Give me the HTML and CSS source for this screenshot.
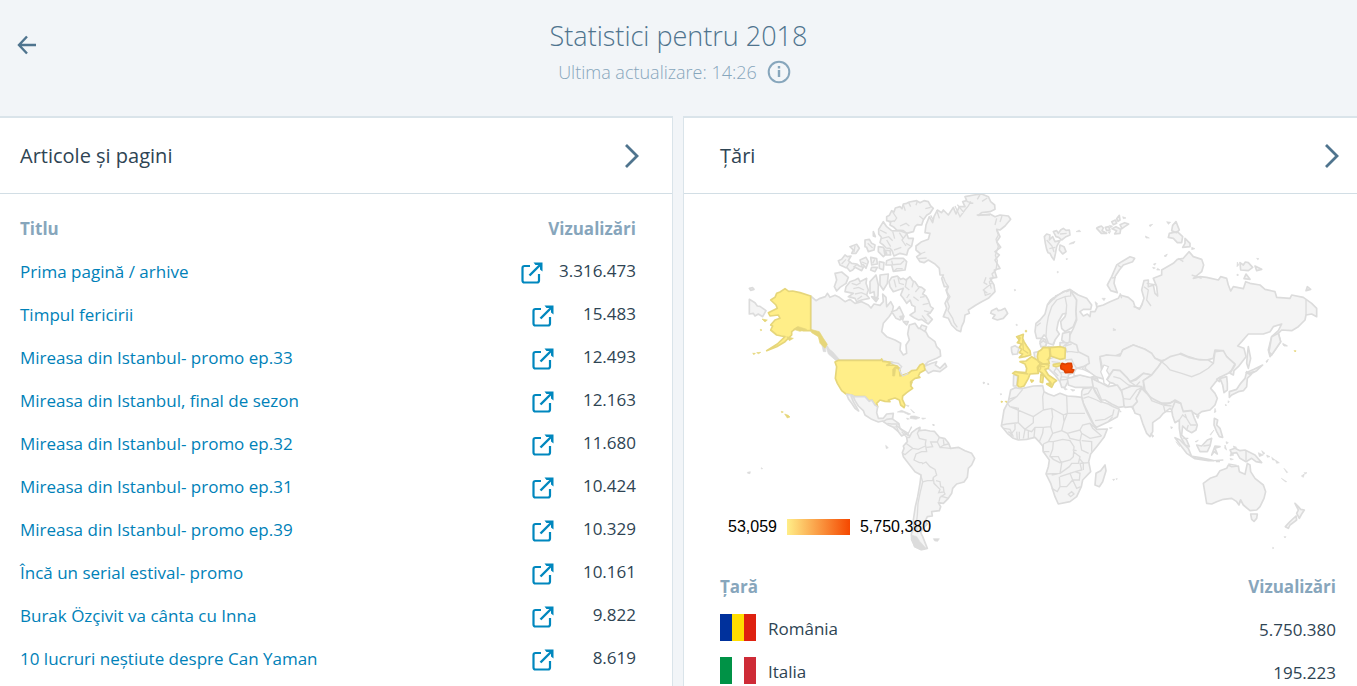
FILE: index.html
```html
<!doctype html>
<html lang="ro">
<head>
    <meta charset="utf-8">
    <title>Statistici pentru 2018</title>
    <link rel="stylesheet" href="styles.css">
</head>

<body>
<svg class="sprite" aria-hidden="true">
    <symbol id="external" viewBox="0 0 22 22">
        <path d="M9 4H3.500Q1.500 4 1.500 6V18.500Q1.500 20.500 3.500 20.500H16Q18 20.500 18 18.500V12" fill="none" stroke="currentColor" stroke-width="2.200"/>
        <path d="M8.500 13.500L20 2" fill="none" stroke="currentColor" stroke-width="2.400"/>
        <path d="M12.500 .500H21.500V9.500L19 7.500V3H14.500z" fill="currentColor"/>
    </symbol>
    <symbol id="chevron" viewBox="0 0 16 26">
        <path d="M2 2L13 13L2 24" fill="none" stroke="currentColor" stroke-width="2.800"/>
    </symbol>
</svg>

<header class="top">
    <a class="back" href="#" aria-label="Înapoi">
        <svg viewBox="0 0 20 20"><path d="M10 1.500L2 10L10 18.500M2 10H19" fill="none" stroke="currentColor" stroke-width="2.400"/></svg>
    </a>
    <div class="heading">
        <h1>Statistici pentru 2018</h1>
        <p>Ultima actualizare: 14:26
            <svg class="info" viewBox="0 0 24 24"><circle cx="12" cy="12" r="10.300" fill="none" stroke="currentColor" stroke-width="2"/><path d="M10.800 6h2.400v2.500h-2.400zM10.800 10h2.400v7h-2.400z" fill="currentColor"/></svg>
        </p>
    </div>
</header>

<main class="columns">
    <section class="card posts">
        <a class="card_head" href="#">
            <h2>Articole și pagini</h2>
            <svg class="chevron"><use href="#chevron"/></svg>
        </a>
        <table>
            <thead>
            <tr><th>Titlu</th><th class="num">Vizualizări</th></tr>
            </thead>
            <tbody>
            <tr><td><a href="#">Prima pagină / arhive</a></td><td class="num"><a href="#" aria-label="Deschide"><svg class="ext"><use href="#external"/></svg></a><span>3.316.473</span></td></tr>
            <tr><td><a href="#">Timpul fericirii</a></td><td class="num"><a href="#" aria-label="Deschide"><svg class="ext"><use href="#external"/></svg></a><span>15.483</span></td></tr>
            <tr><td><a href="#">Mireasa din Istanbul- promo ep.33</a></td><td class="num"><a href="#" aria-label="Deschide"><svg class="ext"><use href="#external"/></svg></a><span>12.493</span></td></tr>
            <tr><td><a href="#">Mireasa din Istanbul, final de sezon</a></td><td class="num"><a href="#" aria-label="Deschide"><svg class="ext"><use href="#external"/></svg></a><span>12.163</span></td></tr>
            <tr><td><a href="#">Mireasa din Istanbul- promo ep.32</a></td><td class="num"><a href="#" aria-label="Deschide"><svg class="ext"><use href="#external"/></svg></a><span>11.680</span></td></tr>
            <tr><td><a href="#">Mireasa din Istanbul- promo ep.31</a></td><td class="num"><a href="#" aria-label="Deschide"><svg class="ext"><use href="#external"/></svg></a><span>10.424</span></td></tr>
            <tr><td><a href="#">Mireasa din Istanbul- promo ep.39</a></td><td class="num"><a href="#" aria-label="Deschide"><svg class="ext"><use href="#external"/></svg></a><span>10.329</span></td></tr>
            <tr><td><a href="#">Încă un serial estival- promo</a></td><td class="num"><a href="#" aria-label="Deschide"><svg class="ext"><use href="#external"/></svg></a><span>10.161</span></td></tr>
            <tr><td><a href="#">Burak Özçivit va cânta cu Inna</a></td><td class="num"><a href="#" aria-label="Deschide"><svg class="ext"><use href="#external"/></svg></a><span>9.822</span></td></tr>
            <tr><td><a href="#">10 lucruri neștiute despre Can Yaman</a></td><td class="num"><a href="#" aria-label="Deschide"><svg class="ext"><use href="#external"/></svg></a><span>8.619</span></td></tr>
            </tbody>
        </table>
    </section>

    <section class="card countries">
        <a class="card_head" href="#">
            <h2>Țări</h2>
            <svg class="chevron"><use href="#chevron"/></svg>
        </a>
        <div class="map">
            <svg class="world" viewBox="0 0 1848 1113" aria-label="Hartă">
                <!-- Canada, Arctic, Alaska -->
                <g transform="translate(60 -12)">
                    <path class="land" d="M212 318L228 332L240 325L256 320L262 310L270 322L285 316L298 322L315 335L330 328L345 340L365 335L385 345L393 354L402 342L420 346L430 335L428 312L438 322L440 350L452 335L460 350L457 365L447 380L430 400L425 425L440 440L465 450L482 460L480 480L490 495L500 490L498 465L508 450L503 432L508 405L525 400L535 415L550 415L560 430L565 440L585 455L590 470L600 480L602 498L590 505L565 515L550 530L575 520L590 515L586 525L600 535L615 520L620 530L600 545L580 542L565 550L553 535L545 525L530 540L510 547L485 560L478 540L455 520L425 510L295 510L285 500L270 485L262 470L245 450L235 430L212 422Z"/>
                    <path class="land" d="M440 80L448 76L455 62L462 66L466 54L480 50L486 56L490 42L500 40L508 36L530 32L540 38L552 32L565 35L572 48L580 55L570 70L560 76L550 90L545 105L532 104L525 110L520 125L500 130L490 122L470 120L462 112L450 105L452 95L440 92Z"/>
                    <path class="land" d="M430 95L440 110L455 122L482 123L500 130L505 145L520 145L515 168L505 178L500 195L480 190L462 198L456 182L450 175L438 174L430 165L420 158L424 142L416 132L416 118Z"/>
                    <path class="line" d="M458 66L470 84L462 96M490 44L496 62M506 38L512 50M532 34L528 46M572 52L556 56M550 88L538 78M480 108L498 100L508 108M446 96L466 92M420 120L440 130M424 146L446 140L458 152M458 124L464 146M500 132L486 150L498 168M462 180L484 172M478 128L490 146M512 168L498 160M440 150L452 170"/>
                    <path class="land" d="M440 212L460 205L490 205L500 215L495 240L460 244L455 225L438 225ZM432 180L450 182L452 195L435 195ZM415 170L430 172L440 190L430 200L415 185ZM392 202L410 206L412 222L395 225ZM375 150L388 148L395 160L405 165L402 180L385 185L380 172L375 170ZM330 170L350 163L358 175L348 190L335 190L340 180ZM295 212L305 208L315 195L322 200L333 198L325 212L335 220L350 222L358 228L370 232L365 242L345 232L338 240L330 244L322 234L315 232L300 225ZM360 210L378 202L385 215L378 235L370 224L365 225ZM400 125L406 140L400 138ZM395 232L412 232L405 245L392 240ZM418 215L432 218L430 240L418 235Z"/>
                    <path class="line" d="M305 222L318 208M320 232L330 214M340 232L350 224M383 160L398 174M345 168L342 186M366 216L380 222M455 212L458 224L482 222L492 212M404 208L398 220M462 244L470 236L488 236"/>
                    <path class="land" d="M285 250L305 246L325 262L318 280L300 292L290 303L283 290L290 270Z"/>
                    <path class="land" d="M318 290L330 275L345 270L355 265L360 275L380 265L378 280L385 300L380 315L388 325L365 330L350 335L345 325L325 320L340 310L315 305Z"/>
                    <path class="line" d="M335 280L350 285L362 278M340 296L356 292L372 300M345 312L364 308L378 314M352 328L366 318"/>
                    <path class="land" d="M420 255L445 252L442 280L430 300L420 285ZM390 275L408 255L415 285L414 318L405 330L402 305L390 310ZM395 320L415 325L408 335Z"/>
                    <path class="land" d="M447 275L455 262L472 258L482 268L490 265L498 270L510 260L518 272L525 275L535 290L545 292L555 300L548 312L558 318L565 330L572 350L580 355L570 370L562 373L577 388L565 402L556 396L545 388L536 390L525 385L510 375L525 365L525 350L516 346L510 330L500 340L490 325L482 315L490 295L475 300L460 305L450 290Z"/>
                    <path class="line" d="M474 262L478 280L492 284M500 270L496 290L508 300M520 276L516 292M538 292L526 306M554 320L540 322M566 340L548 344M572 368L552 362M560 394L546 376M462 268L468 292M520 320L536 332M508 312L500 324"/>
                    <path class="land" d="M455 365L470 360L478 350L490 375L480 390L468 385ZM545 405L560 410L555 425L540 415ZM490 395L505 395L500 405ZM480 380L492 378L488 390Z"/>
                    <path class="land" d="M28 328L45 338L52 348L60 349L78 362L68 380L55 372L45 378L40 370L28 372ZM28 295L38 293L42 298L32 301Z"/>
                    <path class="land dark" d="M245 462L255 470L258 485L250 485ZM258 470L278 485L298 508L288 512L265 492Z"/>
                    <path class="usa" d="M92 330L105 322L110 310L120 306L135 296L146 304L158 303L180 308L212 318L212 422L190 422L172 412L155 425L155 435L135 455L110 470L80 482L112 462L135 440L124 438L110 435L92 420L98 408L92 405L105 390L120 385L115 375L90 378L85 368L112 355L108 345Z"/>
                    <path class="usa deep" d="M212 418L238 425L250 445L262 463L255 475L240 460L235 440L215 428ZM140 440L160 445L148 452ZM66 387L82 390L75 396ZM61 418L66 420L62 422ZM38 490L46 490L42 494ZM50 488L62 487L56 491ZM160 418L175 410L200 418L180 424Z"/>
                </g>
                <!-- USA, Mexico, Caribbean -->
                <g transform="translate(60 438)">
                    <path class="usa" d="M295 61L422 61L425 57L428 64L456 67L440 76L458 75L472 78L478 88L480 108L505 100L515 92L530 90L540 75L548 71L552 75L555 90L540 98L535 108L540 112L525 115L513 125L512 138L518 145L500 158L488 168L487 178L495 195L492 203L482 195L478 180L465 174L445 180L450 185L435 184L420 180L410 190L413 200L405 195L395 180L388 184L375 170L345 170L335 165L318 162L305 152L292 130L286 115L290 80L285 66Z"/>
                    <path class="usa deep" d="M465 80L458 88L458 108L464 108L467 85L476 88L482 95L478 82ZM124 214L130 216L125 218ZM134 222L145 226L150 231L142 234ZM510 125L518 125L512 140Z"/>
                    <path class="line" d="M452 66L475 70L485 80L478 90L488 108L505 100"/>
                    <path class="land" d="M320 163L335 165L345 170L375 170L388 184L395 180L405 195L413 200L410 218L415 235L430 235L440 222L460 220L458 235L442 250L428 243L415 246L395 238L375 225L370 212L355 198L345 182L340 170L333 168L340 185L356 213L345 205L335 190L326 178Z"/>
                    <path class="land" d="M430 245L440 238L456 236L476 250L480 265L495 278L510 288L495 282L485 288L475 275L460 262L445 255Z"/>
                    <path class="line" d="M442 250L455 252L478 252M460 262L470 260L475 275"/>
                    <path class="land dark" d="M472 216L485 211L512 222L505 224L490 217ZM512 228L525 228L540 233L528 238L510 235ZM545 234L557 235L548 238ZM500 234L508 237L501 238ZM497 195L507 197L505 200ZM512 208L524 218L520 218ZM579 252L583 256L579 257ZM437 316L445 323L439 326ZM22 397L31 395L30 401L23 400ZM64 383L68 386L64 387Z"/>
                </g>
                <!-- South America -->
                <g transform="translate(510 498)">
                    <path class="land" d="M50 232L58 232L65 218L78 208L90 202L88 212L105 210L120 213L133 214L148 232L165 236L175 248L182 265L205 262L225 272L245 280L254 295L245 315L235 325L232 352L222 366L200 372L188 385L185 400L175 415L160 430L145 428L152 440L148 452L125 455L127 468L112 470L105 485L112 492L98 506L92 518L98 530L112 565L95 569L75 560L65 540L64 522L72 500L70 480L76 440L83 410L90 370L93 345L75 335L55 310L40 290L37 278L42 265L40 258L52 245Z"/>
                    <path class="line" d="M90 204L82 220L88 235L108 240L106 252L110 275L95 275L78 282L72 300L88 308L98 308M48 250L68 265L85 268L106 258M68 265L55 275L45 284L38 280M110 262L128 260L122 246L142 246L148 232M142 246L150 262L162 255L160 238M162 255L175 252M150 262L182 265M96 312L108 306L120 320L135 328L140 345L130 352L128 362L112 362L98 366L92 345M130 355L132 370L150 388L146 398L162 396L160 382L152 380L150 365L138 362M162 396L165 402L150 412L147 425M152 408L176 415M98 366L90 400L84 430L82 465L78 500L84 520"/>
                    <path class="land dark" d="M130 536L148 536L143 544L134 543ZM64 525L80 530L90 545L108 565L92 570L72 560ZM280 66L285 68L281 71ZM293 70L297 72L294 74ZM128 193L133 194L131 198Z"/>
                    <path class="line" d="M65 200L55 220L30 205L18 195M35 215L50 232"/>
                </g>
                <!-- Greenland, Iceland, Svalbard, Scandinavia -->
                <g transform="translate(540 -12)">
                    <path class="land" d="M75 128L78 105L88 80L98 98L102 80L112 60L125 68L130 60L145 75L160 52L168 72L178 50L195 50L188 35L200 32L195 20L222 15L245 12L265 20L272 35L284 45L285 58L270 65L245 68L235 76L270 72L285 80L300 75L325 78L332 88L315 108L300 120L290 118L300 140L290 155L302 172L285 185L298 195L285 210L300 235L283 240L290 262L270 265L282 285L285 305L265 325L245 335L228 345L205 360L208 370L195 375L192 395L185 410L182 425L170 420L155 405L145 385L130 380L140 355L135 340L145 320L138 300L145 290L133 290L125 265L130 255L120 255L118 235L105 222L85 210L72 218L60 215L50 200L62 192L48 180L48 168L65 155L85 148L90 130Z"/>
                    <path class="line" d="M130 260L136 276L145 290L140 304L150 320L142 334L148 350L144 362L158 385L162 398L172 412M290 120L295 135L288 148L295 170L286 196L292 212L288 240L276 252L280 262L268 276L274 296M110 60L118 85M100 90L92 76M165 48L180 80L195 60M172 44L190 66L205 48L212 34M200 34L220 40M290 85L285 105M306 78L300 96M275 280L250 300L262 310M258 262L252 278L262 284M252 300L256 316L272 310M230 75L270 75M240 14L232 28M262 24L246 34M60 192L76 186M54 206L80 204"/>
                    <path class="land" d="M275 362L290 355L295 362L304 360L315 355L323 370L310 385L292 390L278 385L285 375L272 370Z"/>
                    <path class="land" d="M433 140L440 132L450 135L448 150L458 140L465 155L480 152L474 162L470 170L466 192L462 210L456 202L450 190L444 188L440 178L436 160ZM460 125L470 122L475 130L482 120L490 115L498 121L508 120L510 135L498 140L485 150L476 142L468 140ZM480 165L492 170L498 185L488 192L478 180Z"/>
                    <path class="line" d="M440 150L456 168L462 186M448 176L466 172M480 132L500 130"/>
                    <path class="land dark" d="M528 125L538 120L542 125ZM510 160L525 154L522 160L507 163ZM498 206L503 206L500 210ZM472 244L476 246L472 249ZM343 298L348 300L344 303ZM348 402L353 405L349 407ZM590 112L600 108L600 125Z"/>
                    <path class="land" d="M408 400L420 390L435 372L442 345L452 330L470 318L490 305L510 298L530 312L530 345L528 365L530 385L520 410L495 425L485 415L482 395L495 380L498 370L488 372L475 395L470 420L478 432L465 450L460 465L445 460L438 440L432 435L425 445L410 445L405 425Z"/>
                    <path class="line" d="M438 438L440 410L445 380L455 350L470 330L495 320L500 345L498 370M495 320L512 318L512 305M465 318L480 312L505 300M442 345L470 318M446 342L456 328L466 326M450 334L462 322M484 310L494 302M498 306L508 302M410 408L422 398"/>
                    <path class="land" d="M425 445L436 448L440 460L436 472L424 470L420 455ZM488 430L510 425L510 445L515 460L495 458L485 450ZM480 458L498 458L512 465L505 480L495 478L480 472Z"/>
                </g>
                <!-- Russia -->
                <g transform="translate(1110 -12)">
                    <path class="land" d="M-60 300L-35 315L-10 325L5 345L2 358L-20 358L-30 365L-20 378L-8 372L0 380L2 365L15 365L22 350L40 345L60 335L85 325L90 315L115 322L130 335L135 350L148 358L155 345L162 325L155 300L162 272L175 270L175 290L190 285L195 310L203 318L200 290L190 265L215 255L215 240L250 220L262 208L280 205L297 185L310 200L335 208L341 225L335 245L310 265L330 260L350 262L385 270L392 260L410 265L415 285L422 303L430 290L460 296L467 275L480 280L510 285L525 298L555 305L560 322L600 325L605 315L640 322L665 340L680 355L680 380L665 372L648 375L645 390L625 410L605 422L575 420L565 430L572 455L555 480L540 500L535 480L545 440L565 422L575 402L550 410L540 425L520 432L475 432L455 455L443 468L462 475L468 500L445 530L432 542L430 555L420 550L435 525L410 500L395 482L375 480L370 505L350 510L320 508L295 500L272 490L265 500L235 508L215 512L195 505L180 488L165 478L130 465L98 480L95 490L70 500L50 495L30 505L35 540L45 568L15 560L-15 535L-5 505L-35 495L-45 475L-62 460L-60 435L-50 415L-40 390L-42 365L-40 330Z"/>
                    <path class="land" d="M52 285L65 260L80 225L95 215L120 200L134 205L128 215L100 225L88 240L75 260L72 280L82 308L62 302Z"/>
                    <path class="land" d="M258 95L268 120L260 128L245 122L248 106ZM238 130L262 125L278 140L275 158L262 158L250 145L235 142ZM285 145L300 160L300 170L278 172L285 160ZM450 218L460 225L466 216L475 218L488 232L475 242L452 240ZM495 228L515 238L500 242ZM468 252L480 268L462 266ZM652 290L662 298L648 302ZM545 440L565 430L572 455L545 495L537 485Z"/>
                    <path class="land" d="M20 115L34 108L40 114L36 122L50 130L34 130ZM46 112L56 110L60 120L50 122ZM65 95L76 90L80 100L70 104ZM80 86L88 76L90 90L84 94ZM90 104L104 98L116 102L104 110L96 116ZM66 116L78 110L92 118L90 130L74 132L80 122Z"/>
                    <path class="land dark" d="M98 80L108 84L100 86ZM58 106L68 108L62 114ZM54 126L62 124L58 131ZM178 105L188 103L180 110ZM166 138L178 144L168 144ZM230 95L242 97L235 103ZM222 198L232 192L228 200ZM190 222L198 220L194 226ZM203 235L210 240L200 240ZM188 232L196 234L190 236ZM305 172L315 176L305 179ZM442 216L446 225L441 230ZM500 205L507 206L503 209ZM441 252L446 255L441 257ZM36 325L46 325L42 332ZM15 335L22 340L20 355ZM578 462L592 468L582 468ZM528 515L532 510L530 518Z"/>
                    <path class="line" d="M130 350L150 355L158 340M162 290L175 300L170 330L183 348M305 255L335 265M648 330L648 375M170 280L200 285M90 310L95 325M265 205L280 215M66 264L78 262M84 226L94 232"/>
                    <path class="usa deep" d="M612 482L618 482L616 486Z"/>
                </g>
                <!-- Central, South and East Asia -->
                <g transform="translate(1200 438)">
                    <path class="land" d="M-60 50L-40 45L0 48L8 30L40 15L75 28L95 40L105 55L125 65L115 80L95 105L70 100L45 118L30 125L20 112L0 92L-20 90L-30 105L-45 95L-55 75Z"/>
                    <path class="land" d="M-30 105L-20 90L0 92L20 112L30 125L48 120L70 100L95 105L70 122L72 150L60 140L35 138L10 150L5 170L0 145L-20 130L-42 125Z"/>
                    <path class="land" d="M5 175L5 150L35 138L65 140L60 152L50 178L55 190L45 215L35 200L15 202L0 180Z"/>
                    <path class="line" d="M-20 110L0 115L25 135L35 138M5 175L30 178L50 150L68 142M30 125L48 138L60 125"/>
                    <path class="land" d="M125 65L150 50L180 42L205 52L240 60L265 60L280 70L285 35L310 32L320 50L345 72L335 90L325 100L300 112L285 128L272 145L285 160L292 175L285 195L270 210L245 215L232 225L210 212L188 215L175 195L165 182L150 190L125 190L105 185L90 170L75 150L70 122L95 105L115 80Z"/>
                    <path class="line" d="M125 65L140 78L150 90L185 100L215 110L240 100L265 85L280 70"/>
                    <path class="land" d="M65 145L80 160L90 172L125 190L150 190L165 180L182 190L170 200L155 210L150 205L130 220L120 232L98 248L98 275L90 290L80 280L68 250L60 225L45 220L38 200L52 185L48 175Z"/>
                    <path class="line" d="M90 172L95 182L130 195L160 185M130 195L135 215L155 215M128 195L155 198"/>
                    <path class="land" d="M155 210L165 185L182 190L190 215L215 212L222 232L232 255L228 270L215 278L200 270L188 258L185 285L200 300L208 320L195 315L182 290L178 265L178 240L165 248L158 228Z"/>
                    <path class="line" d="M178 240L188 225L200 235L212 255L230 255M200 235L195 222M200 270L205 255M190 295L205 295"/>
                    <path class="land" d="M300 115L320 110L322 130L322 150L312 158L308 135ZM290 118L300 112L298 125ZM385 20L392 55L385 85L380 70L382 45Z"/>
                    <path class="land" d="M380 95L390 100L400 95L392 105L382 115L380 140L370 152L355 155L335 165L328 172L328 155L350 148L362 130L375 115ZM378 98L402 88L428 75L410 92L390 103Z"/>
                    <path class="land" d="M165 293L180 300L205 325L215 350L200 340L185 320ZM212 348L240 353L265 358L280 362L265 362L225 356ZM230 315L245 318L262 300L275 295L270 318L262 335L240 335ZM285 318L300 320L285 325L292 342L282 335L275 345ZM283 235L293 240L290 255L300 265L308 292L298 290L290 275L282 255ZM330 330L345 325L360 332L375 330L405 345L425 368L408 365L395 355L378 365L360 355L350 338L335 340Z"/>
                    <path class="line" d="M378 332L378 362M250 318L270 315M280 362L310 360M288 365L300 365"/>
                    <path class="land dark" d="M92 280L102 288L97 292ZM152 260L158 262L154 267ZM228 228L238 226L234 236ZM285 205L288 215L283 218ZM282 270L272 285L270 284ZM316 193L320 195L317 198ZM325 182L328 186L324 188ZM315 315L320 330L314 325ZM318 305L325 308L320 312ZM340 318L350 322L342 324ZM415 338L430 345L418 350ZM425 332L435 340L430 343ZM440 345L450 350L442 352ZM455 352L465 360L458 360ZM466 360L478 368L470 370ZM492 385L503 397L500 398ZM484 415L500 425L496 425ZM544 408L553 402L550 412ZM552 398L561 398L556 402ZM440 64L445 57L442 66ZM488 10L502 17L492 17ZM225 305L235 300L230 306ZM332 340L342 345L330 348ZM330 355L340 358L332 360ZM492 590L498 590L495 594ZM458 622L462 624L458 626ZM0 212L4 215L0 216ZM168 305L180 320L175 315Z"/>
                    <path class="land" d="M250 430L270 415L290 408L300 392L320 385L325 375L335 380L355 378L358 395L375 403L382 370L390 375L392 395L405 415L430 435L437 455L432 475L420 500L410 510L390 512L370 495L362 480L357 495L350 485L335 475L310 478L290 485L275 492L260 490L255 460Z"/>
                    <path class="line" d="M325 372L350 376M362 478L357 492"/>
                    <path class="land" d="M392 522L412 522L410 535L402 544L395 538ZM525 490L535 500L542 508L553 510L545 522L538 535L530 520L535 510ZM528 528L530 540L510 555L505 565L496 560L510 545Z"/>
                </g>
                <!-- Europe, Middle East, Africa -->
                <g transform="translate(780 318)">
                    <path class="land" d="M162 158L175 155L205 140L245 145L255 135L270 125L290 135L295 155L325 170L328 190L310 200L290 205L280 218L265 225L265 240L262 248L255 262L245 262L240 245L225 225L205 205L200 195L175 190L165 175Z"/>
                    <path class="line" d="M255 155L275 155L295 158M255 180L275 178L280 190L290 205M205 178L222 172L250 178M215 185L240 188M225 200L235 210L245 225M240 218L280 218M245 230L265 232M245 225L240 245M240 240L262 238M228 205L222 215L235 228M255 138L275 132M262 158L255 140"/>
                    <path class="land" d="M94 142L105 137L117 145L112 162L98 163L95 155ZM101 225L113 227L110 258L100 258ZM180 130L190 122L200 130L195 140L183 140Z"/>
                    <path class="usa" d="M110 110L130 103L128 115L132 125L140 138L150 152L152 165L135 170L118 173L128 162L118 158L125 148L118 142L125 132L112 128L118 120Z"/>
                    <path class="usa" d="M120 185L138 183L155 170L175 182L182 190L172 202L175 220L150 222L145 235L132 258L118 263L112 255L115 228L98 220L105 215L138 218L140 205L135 192Z"/>
                    <path class="usa" d="M175 155L183 150L190 142L208 143L212 165L205 178L208 190L190 192L175 185L172 170ZM210 143L242 140L256 145L255 175L240 178L212 168Z"/>
                    <path class="usa" d="M175 198L190 192L207 195L205 205L195 208L205 225L230 242L222 248L215 262L200 252L212 248L200 235L185 218L175 212ZM183 222L190 228L188 248L181 246ZM152 240L160 242L155 246ZM220 193L240 190L245 195L230 200L220 198Z"/>
                    <path class="line gold" d="M110 218L145 222M178 185L182 205L178 212M185 192L207 192M175 182L185 190M175 200L195 200M208 145L210 175L200 180M128 120L130 150L145 160"/>
                    <path class="usa deep" d="M136 91L140 91L140 96L136 96ZM63 303L69 305L64 308ZM75 304L82 304L79 308ZM115 108L122 113L118 125ZM200 250L216 250L212 260Z"/>
                    <path class="romania" d="M242 198L246 190L256 193L264 190L274 190L276 200L274 207L282 210L280 217L270 217L256 218L252 210L243 206Z"/>
                    <path class="land" d="M262 235L275 232L300 225L330 232L352 235L355 258L340 262L300 262L285 262L265 255Z"/>
                    <path class="land" d="M310 265L340 262L345 275L365 305L385 312L400 320L418 328L412 350L385 365L350 382L342 375L325 340L310 310L305 290L305 275Z"/>
                    <path class="land" d="M340 262L335 235L365 250L385 260L412 255L425 275L430 295L432 320L415 322L395 312L375 300L362 300L350 280Z"/>
                    <path class="line" d="M310 285L325 280L335 265M310 295L325 290L350 300L365 308M345 362L375 358L398 345L402 328M335 235L355 245L352 235M335 262L350 265L365 300M398 350L385 365"/>
                    <path class="water" d="M372 195L385 200L380 212L388 225L380 238L390 248L385 258L372 250L370 235L362 215Z"/>
                    <path class="water" d="M282 218L290 205L310 208L330 218L345 228L330 232L300 225L282 228ZM295 205L310 200L308 208Z"/>
                    <path class="land" d="M92 270L105 263L125 266L160 258L188 257L192 275L205 282L222 288L240 280L262 288L288 290L305 292L310 310L320 335L335 365L350 388L382 387L372 412L350 440L332 462L326 485L332 515L308 540L304 560L290 590L270 605L235 612L225 590L212 550L198 522L205 500L208 480L190 455L188 438L180 428L165 412L140 418L115 420L100 415L82 400L64 378L68 355L72 330L85 305Z"/>
                    <path class="line" d="M85 298L110 290L128 268M110 290L82 310M82 310L90 320L160 350M90 320L115 325L115 368L80 372L66 375M160 350L190 330L188 290L192 275M190 330L215 325L250 345L252 365M260 288L262 340L315 340M215 325L218 350L212 380L190 382L165 382L155 395L135 388L115 368M160 350L160 368L135 388M165 382L162 412M190 382L188 400L178 425M135 388L130 415M212 380L218 400L205 425L190 432M218 400L245 392L252 365M245 392L262 400L270 415L300 422L305 400L300 390L308 375L330 370L350 388M300 390L262 400M262 340L252 365M305 400L330 415L365 408M330 370L338 385L365 408M305 422L335 425L335 455M300 422L305 450L326 460M220 425L248 418L270 422L282 440L280 470L270 480L240 488L220 478L210 468L218 448L220 425L205 425M208 470L235 470L245 490L240 520L200 522M240 520L268 500L275 490L295 490L300 470L280 455M240 520L215 525M238 530L240 560L232 575L215 565M240 560L260 560L278 540L270 520L240 530M278 540L298 540L300 520L285 515L270 520M285 515L305 510L300 490L328 488M278 540L290 565L302 560M105 370L105 388L95 400M72 385L90 388L100 410M110 395L112 420M250 345L262 340M190 432L190 455L208 455M298 475L310 490L310 510M278 450L290 452M85 395L92 400L95 412M118 395L118 418M145 390L145 415M265 583L275 575L282 582L272 590Z"/>
                    <path class="land" d="M375 495L378 512L368 545L358 560L345 555L348 520L362 512Z"/>
                    <path class="land dark" d="M388 383L397 383L390 386ZM398 538L404 538L401 542ZM408 536L412 536L410 539ZM9 247L14 248L10 251ZM23 252L27 252L25 255ZM61 281L66 282L62 285ZM272 268L285 270L278 274ZM250 262L262 268L255 270ZM218 130L225 122L222 132ZM400 85L408 90L400 92Z"/>
                </g>
            </svg>
            <div class="legend"><span>53,059</span><i class="scale"></i><span>5,750,380</span></div>
        </div>
        <table>
            <thead>
            <tr><th>Țară</th><th class="num">Vizualizări</th></tr>
            </thead>
            <tbody>
            <tr><td><span class="flag ro"></span>România</td><td class="num">5.750.380</td></tr>
            <tr><td><span class="flag it"></span>Italia</td><td class="num">195.223</td></tr>
            </tbody>
        </table>
    </section>
</main>
</body>

</html>
```
FILE: styles.css
```css
html {
    overflow: hidden;
}

body,
h1,
h2,
p {
    margin: 0;
    font-weight: 400;
}

body {
    background: #f2f5f8;
    color: #2e4453;
    font: 17px/24px "Open Sans", "Noto Sans", sans-serif;
}

a {
    color: #0081b8;
    text-decoration: none;
}

.sprite {
    display: block;
    width: 0;
    height: 0;
}

/* header */
.top {
    display: grid;
    grid-template-columns: 56px 1fr 56px;
    height: 116px;
    box-sizing: border-box;
    padding-top: 14px;
}

.back {
    padding: 21px 0 0 17px;
    color: #4f748e;
}

.back svg {
    display: block;
    width: 20px;
    height: 20px;
}

.heading {
    text-align: center;
}

.heading h1 {
    color: #4f748e;
    font-size: 27px;
    line-height: 44px;
    font-weight: 300;
}

.heading p {
    display: flex;
    justify-content: center;
    align-items: center;
    gap: 10px;
    padding-right: 8px;
    color: #87a6bc;
    font-size: 18px;
    line-height: 28px;
    font-weight: 300;
}

.info {
    width: 24px;
    height: 24px;
}

/* cards */
.columns {
    display: grid;
    grid-template-columns: 1fr 1fr;
    gap: 10px;
    margin-left: -1px;
}

.card {
    background: #fff;
    border: 1px solid #dae4ea;
    border-top-width: 2px;
}

.countries {
    border-right: 0;
}

.card_head {
    display: flex;
    justify-content: space-between;
    align-items: center;
    height: 75px;
    color: #2e4453;
    border-bottom: 1px solid #d2dee5;
}

.card_head h2 {
    font-size: 20px;
    line-height: 28px;
}

.chevron {
    width: 16px;
    height: 26px;
    color: #4f748e;
}

.posts .card_head {
    padding: 0 32px 0 20px;
}

.countries .card_head {
    padding: 0 17px 0 36px;
}

table {
    width: 100%;
    border-collapse: collapse;
}

tr {
    height: 43px;
}

th,
td {
    padding: 0;
    text-align: left;
}

th {
    color: #87a6bc;
    font-weight: 700;
}

.posts table {
    margin-top: 13px;
}

.posts th:first-child,
.posts td:first-child {
    padding-left: 20px;
}

.posts .num {
    padding-right: 36px;
}

.countries th:first-child,
.countries td:first-child {
    padding-left: 36px;
}

.countries .num {
    padding-right: 21px;
}

.num {
    text-align: right;
}

.posts .num span {
    display: inline-block;
    min-width: 66px;
}

.ext {
    width: 22px;
    height: 22px;
    margin-right: 16px;
    vertical-align: middle;
    color: #0087be;
}

.flag {
    display: inline-block;
    width: 36px;
    height: 27px;
    margin: 0 12px 5px 0;
    vertical-align: middle;
}

.ro {
    background: linear-gradient(90deg, #00319c 12px, #ffde00 12px 24px, #de2110 24px);
}

.it {
    background: linear-gradient(90deg, #009246 12px, #fff 12px 24px, #ce2b37 24px);
}

/* world map */
.map {
    position: relative;
    padding: 0 21px 0 36px;
}

.world {
    display: block;
    width: 100%;
}

.land,
.usa,
.romania {
    stroke-width: 5;
    stroke-linejoin: round;
}

.land {
    fill: #f4f4f4;
    stroke: #dcdcdc;
}

.land.dark {
    fill: #dcdcdc;
    stroke-width: 2;
}

.line {
    fill: none;
    stroke: #dcdcdc;
    stroke-width: 4;
}

.water {
    fill: #fff;
    stroke: #dcdcdc;
    stroke-width: 4;
}

.usa {
    fill: #ffee88;
    stroke: #e6d67a;
}

.usa.deep {
    fill: #e6d67a;
    stroke-width: 2;
}

.gold {
    stroke: #e6d67a;
}

.romania {
    fill: #f54800;
    stroke: #dc4100;
}

.legend {
    position: absolute;
    left: 44px;
    bottom: 26px;
    display: flex;
    align-items: center;
    gap: 10px;
    color: #000;
    font: 16px/24px "Liberation Sans", sans-serif;
}

.scale {
    width: 63px;
    height: 16px;
    background: linear-gradient(90deg, #ffee88, #f54800);
}
```
